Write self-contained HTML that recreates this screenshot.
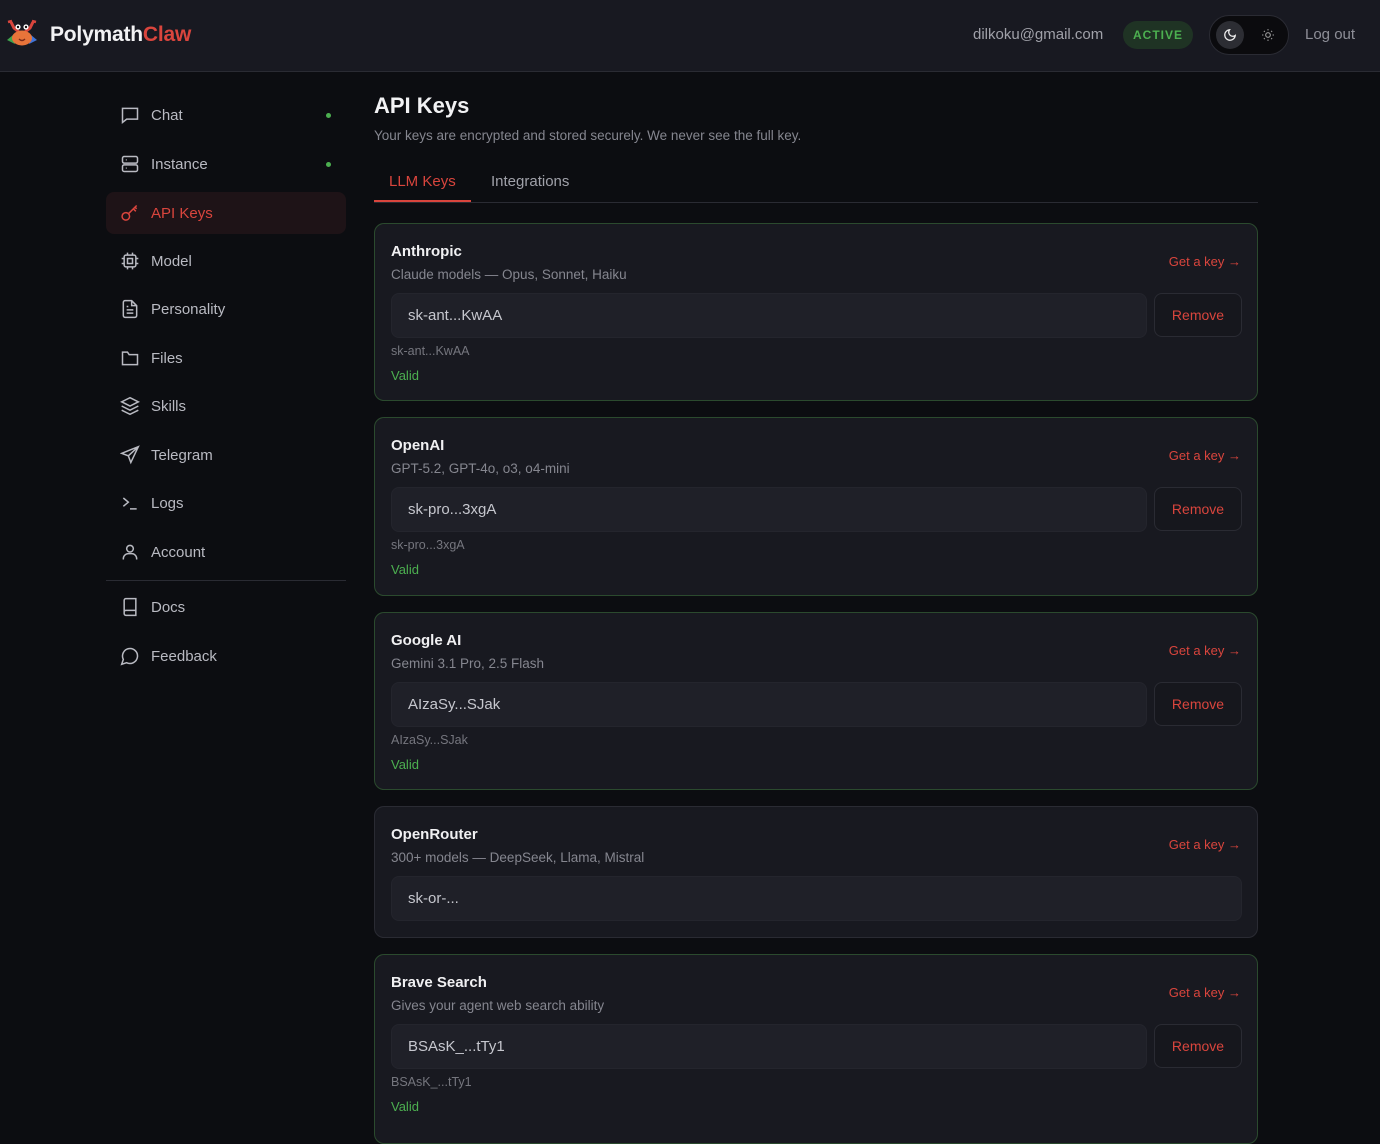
<!DOCTYPE html>
<html><head><meta charset="utf-8"><style>
*{box-sizing:border-box;margin:0;padding:0}
body{width:1380px;height:1130px;overflow:hidden;background:#0c0d11;font-family:"Liberation Sans",sans-serif;color:#e6e6ea;position:relative}
.hdr{position:absolute;left:0;top:0;width:1380px;height:72px;background:#181921;border-bottom:1px solid #2a2b33}
.logo{position:absolute;left:50px;top:23px;font-size:21px;font-weight:bold;color:#f2f2f4;letter-spacing:-0.2px}
.logo span{color:#d9453d}
.email{position:absolute;left:973px;top:26px;font-size:15px;color:#a0a1a9}
.badge{position:absolute;left:1123px;top:21px;width:70px;height:28px;border-radius:14px;background:#1f3324;color:#4caf50;font-size:12px;font-weight:bold;letter-spacing:1px;text-align:center;line-height:28px}
.tog{position:absolute;left:1209px;top:15px;width:80px;height:40px;border-radius:20px;background:#0b0b0e;border:1px solid #2a2b33}
.tog .k{position:absolute;left:6px;top:5px;width:28px;height:28px;border-radius:14px;background:#2c2d33}
.logout{position:absolute;left:1305px;top:26px;font-size:15px;color:#8e8f98}
.nav{position:absolute;left:106px;width:240px;height:42px;border-radius:8px;font-size:15px;color:#b9bac2}
.nav svg{position:absolute;left:14px;top:11px}
.nav .t{position:absolute;left:45px;top:13px}
.nav .dot{position:absolute;left:220px;top:19px;width:5px;height:5px;border-radius:3px;background:#4caf50}
.nav.act{background:#1e1317;color:#d9453d}
.div{position:absolute;left:106px;top:580px;width:240px;height:1px;background:#2a2b33}
h1{position:absolute;left:374px;top:93px;font-size:22px;font-weight:bold;color:#f2f2f4}
.sub{position:absolute;left:374px;top:128px;font-size:13.5px;color:#85868f}
.tabs{position:absolute;left:374px;top:202px;width:884px;height:1px;background:#2a2b33}
.tab{position:absolute;top:173px;font-size:15px;color:#a0a1a9}
.card{position:absolute;left:374px;width:884px;background:#181920;border:1px solid #2b4a2e;border-radius:10px}
.card.g{border-color:#2a2b33}
.card .ti{position:absolute;left:16px;top:19px;font-size:15px;font-weight:bold;color:#f0f0f2}
.card .de{position:absolute;left:16px;top:43px;font-size:13.5px;color:#85868f}
.card .gk{position:absolute;right:16px;top:30px;font-size:13px;color:#d9453d}
.card .in{position:absolute;left:16px;top:69px;width:756px;height:45px;border-radius:8px;background:#1f2028;border:1px solid #24252d;font-size:15px;color:#c6c7ce;padding:13px 16px}
.card.g .in{width:851px}
.card .rm{position:absolute;left:779px;top:69px;width:88px;height:44px;border-radius:8px;border:1px solid #2a2b33;background:#16171d;color:#d9453d;font-size:14px;text-align:center;line-height:42px}
.card .mk{position:absolute;left:16px;top:120px;font-size:12.5px;color:#75767e}
.card .va{position:absolute;left:16px;top:144px;font-size:13px;color:#4caf50}
</style></head><body>
<div class="hdr">
<svg style="position:absolute;left:5px;top:18px" width="34" height="32" viewBox="0 0 34 32">
<path d="M6 4 L9 10 L14 14" stroke="#d9453d" stroke-width="3" fill="none"/>
<path d="M28 4 L25 10 L20 14" stroke="#d9453d" stroke-width="3" fill="none"/>
<path d="M3 4 L7 3 M31 4 L27 3" stroke="#d9453d" stroke-width="2.5"/>
<path d="M2 22 L8 17 L10 26 Z" fill="#3fa34d"/>
<path d="M32 22 L26 17 L24 26 Z" fill="#3f74d9"/>
<ellipse cx="17" cy="20" rx="10" ry="7.5" fill="#e8743a"/>
<circle cx="13" cy="9" r="2.6" fill="#fff"/><circle cx="21" cy="9" r="2.6" fill="#fff"/>
<circle cx="13" cy="9" r="1.2" fill="#111"/><circle cx="21" cy="9" r="1.2" fill="#111"/>
<path d="M14 21 Q17 24 20 21" stroke="#7a2a18" stroke-width="1.3" fill="none"/>
</svg>
<div class="logo">Polymath<span>Claw</span></div>
<div class="email">dilkoku@gmail.com</div>
<div class="badge">ACTIVE</div>
<div class="tog"><div class="k"></div>
<svg style="position:absolute;left:13px;top:12px" width="14" height="14" viewBox="0 0 24 24" fill="none" stroke="#eee" stroke-width="2.2"><path d="M21 12.8A9 9 0 1 1 11.2 3a7 7 0 0 0 9.8 9.8z"/></svg>
<svg style="position:absolute;left:51px;top:12px" width="14" height="14" viewBox="0 0 24 24" fill="none" stroke="#999" stroke-width="2"><circle cx="12" cy="12" r="4"/><path d="M12 2v2M12 20v2M2 12h2M20 12h2M5 5l1.5 1.5M17.5 17.5L19 19M5 19l1.5-1.5M17.5 6.5L19 5"/></svg>
</div>
<div class="logout">Log out</div>
</div>

<div class="nav" style="top:94px"><svg width="20" height="20" viewBox="0 0 24 24" fill="none" stroke="#b9bac2" stroke-width="1.8"><path d="M3 4h18v13H8l-5 4z"/></svg><span class="t">Chat</span><span class="dot"></span></div>
<div class="nav" style="top:143px"><svg width="20" height="20" viewBox="0 0 24 24" fill="none" stroke="#b9bac2" stroke-width="1.8"><rect x="3" y="3" width="18" height="8" rx="2"/><rect x="3" y="13" width="18" height="8" rx="2"/><path d="M7 7h1M7 17h1"/></svg><span class="t">Instance</span><span class="dot"></span></div>
<div class="nav act" style="top:192px"><svg width="20" height="20" viewBox="0 0 24 24" fill="none" stroke="#d9453d" stroke-width="1.8"><circle cx="7" cy="16" r="4.5"/><path d="M10.5 12.5L20 3M16 7l3 3M18 5l2 2"/></svg><span class="t">API Keys</span></div>
<div class="nav" style="top:240px"><svg width="20" height="20" viewBox="0 0 24 24" fill="none" stroke="#b9bac2" stroke-width="1.8"><rect x="5" y="5" width="14" height="14" rx="2"/><rect x="9" y="9" width="6" height="6"/><path d="M9 2v3M15 2v3M9 19v3M15 19v3M2 9h3M2 15h3M19 9h3M19 15h3"/></svg><span class="t">Model</span></div>
<div class="nav" style="top:288px"><svg width="20" height="20" viewBox="0 0 24 24" fill="none" stroke="#b9bac2" stroke-width="1.8"><path d="M14 2H6a2 2 0 0 0-2 2v16a2 2 0 0 0 2 2h12a2 2 0 0 0 2-2V8z"/><path d="M14 2v6h6M8 13h8M8 17h8M8 9h2"/></svg><span class="t">Personality</span></div>
<div class="nav" style="top:337px"><svg width="20" height="20" viewBox="0 0 24 24" fill="none" stroke="#b9bac2" stroke-width="1.8"><path d="M3 5h6l2 3h10v12H3z"/></svg><span class="t">Files</span></div>
<div class="nav" style="top:385px"><svg width="20" height="20" viewBox="0 0 24 24" fill="none" stroke="#b9bac2" stroke-width="1.8"><path d="M12 2l10 5-10 5L2 7z M2 12l10 5 10-5 M2 17l10 5 10-5"/></svg><span class="t">Skills</span></div>
<div class="nav" style="top:434px"><svg width="20" height="20" viewBox="0 0 24 24" fill="none" stroke="#b9bac2" stroke-width="1.8"><path d="M22 2L2 10l8 3 3 8z M10 13L22 2"/></svg><span class="t">Telegram</span></div>
<div class="nav" style="top:482px"><svg width="20" height="20" viewBox="0 0 24 24" fill="none" stroke="#b9bac2" stroke-width="1.8"><path d="M4 6l6 5-6 5M12 19h8"/></svg><span class="t">Logs</span></div>
<div class="nav" style="top:531px"><svg width="20" height="20" viewBox="0 0 24 24" fill="none" stroke="#b9bac2" stroke-width="1.8"><circle cx="12" cy="8" r="4"/><path d="M4 21v-1a6 6 0 0 1 6-6h4a6 6 0 0 1 6 6v1"/></svg><span class="t">Account</span></div>
<div class="div"></div>
<div class="nav" style="top:586px"><svg width="20" height="20" viewBox="0 0 24 24" fill="none" stroke="#b9bac2" stroke-width="1.8"><path d="M5 4a2 2 0 0 1 2-2h12v20H7a2 2 0 0 1-2-2z M5 18a2 2 0 0 1 2-2h12"/></svg><span class="t">Docs</span></div>
<div class="nav" style="top:635px"><svg width="20" height="20" viewBox="0 0 24 24" fill="none" stroke="#b9bac2" stroke-width="1.8"><path d="M7.9 20A9 9 0 1 0 4 16.1L2 22z"/></svg><span class="t">Feedback</span></div>

<h1>API Keys</h1>
<div class="sub">Your keys are encrypted and stored securely. We never see the full key.</div>
<div class="tabs"></div>
<div class="tab" style="left:389px;color:#d9453d">LLM Keys</div>
<div style="position:absolute;left:374px;top:200px;width:97px;height:2px;background:#d9453d"></div>
<div class="tab" style="left:491px">Integrations</div>

<div class="card" style="top:223px;height:178px"><div class="ti">Anthropic</div><div class="de">Claude models — Opus, Sonnet, Haiku</div><div class="gk">Get a key →</div><div class="in">sk-ant...KwAA</div><div class="rm">Remove</div><div class="mk">sk-ant...KwAA</div><div class="va">Valid</div></div>
<div class="card" style="top:417px;height:179px"><div class="ti">OpenAI</div><div class="de">GPT-5.2, GPT-4o, o3, o4-mini</div><div class="gk">Get a key →</div><div class="in">sk-pro...3xgA</div><div class="rm">Remove</div><div class="mk">sk-pro...3xgA</div><div class="va">Valid</div></div>
<div class="card" style="top:612px;height:178px"><div class="ti">Google AI</div><div class="de">Gemini 3.1 Pro, 2.5 Flash</div><div class="gk">Get a key →</div><div class="in">AIzaSy...SJak</div><div class="rm">Remove</div><div class="mk">AIzaSy...SJak</div><div class="va">Valid</div></div>
<div class="card g" style="top:806px;height:132px"><div class="ti">OpenRouter</div><div class="de">300+ models — DeepSeek, Llama, Mistral</div><div class="gk">Get a key →</div><div class="in">sk-or-...</div></div>
<div class="card" style="top:954px;height:190px"><div class="ti">Brave Search</div><div class="de">Gives your agent web search ability</div><div class="gk">Get a key →</div><div class="in">BSAsK_...tTy1</div><div class="rm">Remove</div><div class="mk">BSAsK_...tTy1</div><div class="va">Valid</div></div>
</body></html>
